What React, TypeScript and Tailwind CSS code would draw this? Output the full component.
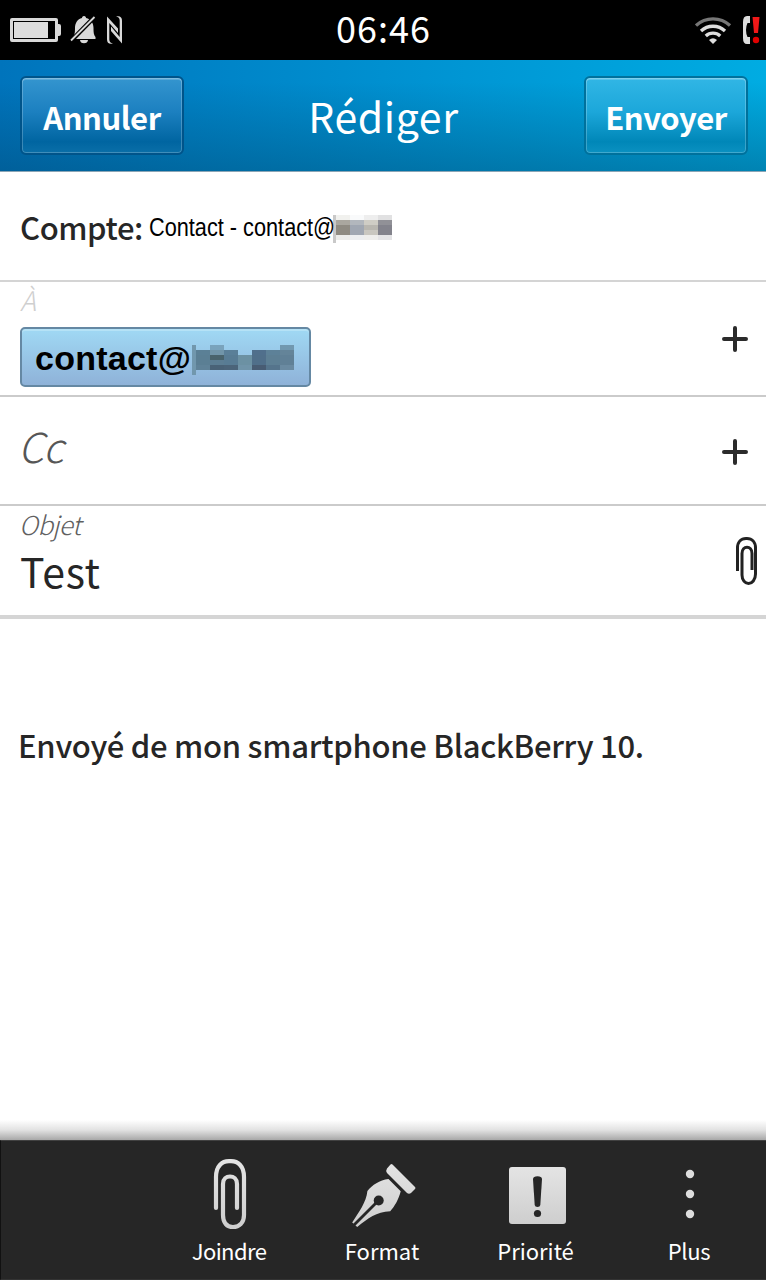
import type { ReactNode } from "react";

const toMosaic: (string | null)[][] = [
  [null, "#7aa3bc", null, null, null, null, "#7198b0"],
  ["#5b8096", "#7195a9", "#5a7f98", null, "#506f8c", "#5d8198", "#648499"],
  ["#5b7f94", "#49636c", "#587c94", "#6c91a3", "#506f8a", "#5d7f94", "#608096"],
  ["#5b7f94", "#5b7d93", "#587c94", "#6c91a3", "#506f8a", "#5d7f94", "#608096"],
  ["#5f8298", "#496277", "#4b6479", "#7094a9", "#485c73", "#55748c", "#6a8aa1"],
];

const accountMosaic: string[][] = [
  ["#f1f1ee", "#f9fafb", "#eeeeee", "#e1e1e2"],
  ["#aaa79f", "#b2b7bd", "#cfcdc5", "#919197"],
  ["#8f8b82", "#a0a7b2", "#b9b7b0", "#83838c"],
  ["#8f8b82", "#a0a7b2", "#c9c7c0", "#83838c"],
  ["#ececea", "#eceef0", "#eeeeec", "#e4e4e6"],
];

function Mosaic({ rows }: { rows: (string | null)[][] }) {
  return (
    <div className="flex flex-col" aria-hidden="true">
      {rows.map((row, y) => (
        <div key={y} className="flex h-[5px]">
          {row.map((c, x) => (
            <span key={x} className="w-[14px]" style={{ background: c ?? "transparent" }} />
          ))}
        </div>
      ))}
    </div>
  );
}

function HeaderButton({ children, className }: { children: ReactNode; className: string }) {
  return (
    <button
      className={`flex h-[79px] w-[164px] items-center justify-center rounded-[6px] border-2 text-[31px] leading-none font-bold tracking-[-0.45px] shadow-[inset_0_0_0_1px_rgba(255,255,255,0.22),inset_0_2px_0_rgba(255,255,255,0.2)] ${className}`}
    >
      <span className="pt-[2px]">{children}</span>
    </button>
  );
}

function Plus() {
  return (
    <svg width="26" height="26" viewBox="0 0 26 26" fill="none" stroke="#2b2b2b" strokeWidth="4" strokeLinecap="round">
      <path d="M13 2v22M2 13h22" />
    </svg>
  );
}

function ToolItem({ icon, label, width, text = "" }: { icon: ReactNode; label: string; width: string; text?: string }) {
  return (
    <div className={`flex flex-col items-center ${width}`}>
      <div className="flex h-[95px] w-full justify-center">{icon}</div>
      <span className={`text-[22px] leading-[28px] whitespace-nowrap ${text}`}>{label}</span>
    </div>
  );
}

export default function App() {
  return (
    <div className="flex h-[1280px] w-[766px] flex-col overflow-hidden bg-white font-['Noto_Sans_CJK_SC','Noto_Sans',sans-serif] text-[#262626]">
      <svg width="0" height="0" className="absolute">
        <defs>
          <linearGradient id="silver" x1="0" y1="0" x2="0" y2="1">
            <stop offset="0" stopColor="#e4e4e4" />
            <stop offset="1" stopColor="#cecece" />
          </linearGradient>
        </defs>
      </svg>

      <div className="flex h-[60px] shrink-0 bg-black text-white">
        <div className="flex w-[336px] pt-[16px] pl-[10px]">
          <svg width="116" height="30" viewBox="10 16 116 30">
            <path fill="#d9d9d9" fillRule="evenodd" d="M12 18h44q2 0 2 2v4h1q2 0 2 2v8q0 2-2 2h-1v4q0 2-2 2H12q-2 0-2-2V20q0-2 2-2zm1 3v18h42V21z" />
            <path fill="#dddddd" d="M14 22h34v16H14z" />
            <path fill="#d9d9d9" d="M84 16c1.500 0 2 1 2 2 5 1 7.500 5 7.500 10 0 5 .5 7 2 9v2H73v-2c1.500-2 2-4 2-9 0-5 2.500-9 7-10 0-1 .5-2 2-2zM80 40h8c0 2-1.800 3.300-4 3.300S80 42 80 40z" />
            <path stroke="#000" strokeWidth="4.500" d="M70.500 41.500L95 16.500" />
            <path stroke="#d9d9d9" strokeWidth="1.800" d="M71 40.500L94.500 17" />
            <path
              fill="#d9d9d9"
              d="M107 16.500L118 28.500v4.500L109.300 23V39.500q0 3.200 3.700 4.300h-2q-4 0-4-4.500zM122 43.500L111 31v-4.500L119.700 37V20.500q0-3.200-3.700-4.300h2q4 0 4 4.500z"
            />
          </svg>
        </div>
        <div className="flex w-[95px] justify-center text-[36px] leading-[55px] tracking-[1px] whitespace-nowrap">06:46</div>
        <div className="flex flex-1 justify-end pt-[16px] pr-[5px]">
          <svg width="66" height="30" viewBox="695 16 66 30" fill="none">
            <g stroke="#dedede" strokeWidth="3.300">
              <path stroke="#777" d="M696 25.500a25 25 0 0 1 34 0" />
              <path d="M701 31a17.500 17.500 0 0 1 24 0" />
              <path d="M705.800 36a10.500 10.500 0 0 1 14.400 0" />
            </g>
            <path fill="#dedede" d="M709 40q4-3.500 8 0l-4 4z" />
            <path fill="#dddddd" d="M750 16v7h-2.500q-1.500 3-1.500 7t1.500 7h2.500v7h-3q-4 0-4-6V22q0-6 4-6z" />
            <path fill="#f01818" d="M752.500 17h7l-1.500 16h-4z" />
            <circle cx="756" cy="40" r="3.200" fill="#df0000" />
          </svg>
        </div>
      </div>

      <header className="h-[112px] shrink-0 border-b border-[#8ba5b5] bg-[linear-gradient(90deg,#0074bc,#0090d0_50%,#00ace2)] text-white">
        <div className="flex h-full items-start justify-between bg-[linear-gradient(180deg,transparent_20%,rgba(0,60,95,0.36)_100%)] pt-[16px] pr-[18px] pl-[20px]">
          <HeaderButton className="border-[#00548a] bg-[linear-gradient(180deg,#3495cf,#1c80c0_45%,#0065a1_85%,#0a6fa8)]">Annuler</HeaderButton>
          <h1 className="pt-[9px] pr-[1px] text-[41px] leading-[60px] font-normal tracking-[0.6px]">Rédiger</h1>
          <HeaderButton className="border-[#00719c] bg-[linear-gradient(180deg,#31b6e5,#1ca7da_45%,#0087b8_85%,#0b91c1)]">Envoyer</HeaderButton>
        </div>
      </header>

      <section className="flex h-[110px] shrink-0 border-b-2 border-[#d4d4d4] pl-[20px]">
        <span className="w-[129px] shrink-0 pt-[33px] text-[31px] leading-[44px] font-medium tracking-[-0.4px]">Compte:</span>
        <div className="w-[184px] pt-[35px]">
          <span className="inline-block origin-left scale-x-[0.835] font-['Liberation_Sans',sans-serif] text-[26px] leading-[40px] whitespace-nowrap text-black">
            Contact - contact@
          </span>
        </div>
        <div className="flex pt-[43px]">
          <span className="h-[28px] w-[3px] bg-[#c9c9c9]" />
          <Mosaic rows={accountMosaic} />
        </div>
      </section>

      <section className="flex h-[115px] shrink-0 justify-between border-b-2 border-[#cbcbcb] pr-[18px] pl-[20px]">
        <div>
          <div className="h-[45px] pt-px text-[27px] leading-[34px] font-light text-[#cfcfcf] italic">À</div>
          <div className="flex h-[60px] w-[291px] rounded-[5px] border-2 border-[#6588a3] bg-[linear-gradient(180deg,#a0d9f4,#8fb2d8)] pl-[13px] shadow-[inset_0_2px_0_#b5e2f6]">
            <span className="w-[157px] font-['Liberation_Sans',sans-serif] text-[34px] leading-[58px] font-bold tracking-[0.25px] text-black">contact@</span>
            <div className="flex pt-[16px]">
              <span className="h-[30px] w-[4px] bg-[#7197ad]" />
              <Mosaic rows={toMosaic} />
            </div>
          </div>
        </div>
        <div className="pt-[44px]"><Plus /></div>
      </section>

      <section className="flex h-[109px] shrink-0 justify-between border-b-2 border-[#cbcbcb] pr-[18px] pl-[18px]">
        <span className="pt-[18px] text-[41px] leading-[60px] font-light tracking-[-0.6px] text-[#565656] italic">Cc</span>
        <div className="pt-[42px]"><Plus /></div>
      </section>

      <section className="flex h-[113px] shrink-0 justify-between border-b-4 border-[#d5d5d5] pr-[8px] pl-[19px]">
        <div>
          <div className="h-[34px] text-[26px] leading-[36px] font-light tracking-[-0.5px] text-[#606060] italic">Objet</div>
          <div className="pl-[1px] text-[41px] leading-[60px] tracking-[0.7px]">Test</div>
        </div>
        <div className="pt-[31px]">
          <svg width="23" height="48" viewBox="0 0 23 48" fill="none" stroke="#222" strokeWidth="3">
            <path d="M2.500 34V11C2.500 5 6 1.500 11 1.500h1C17 1.500 20.500 5 20.500 11v26c0 6-3.500 9.500-7 9.500S7 43 7 38V16.500C7 8 17 8 17 16.500V33" />
          </svg>
        </div>
      </section>

      <main className="flex flex-1 flex-col justify-between">
        <p className="pt-[104px] pl-[18px] text-[31px] leading-[44px] font-medium tracking-[-0.27px] whitespace-nowrap">Envoyé de mon smartphone BlackBerry 10.</p>
        <div className="h-[20px] bg-[linear-gradient(180deg,#fff,#e2e2e2_50%,#a8a8a8)]" />
      </main>

      <footer className="flex h-[140px] shrink-0 border-t border-b border-l border-t-[#414141] border-b-[#333] border-l-[#111] bg-[#262626] pl-[152px] text-white">
        <ToolItem
          width="w-[152px]"
          label="Joindre"
          text="tracking-[-0.6px]"
          icon={
            <svg className="mt-[17px] ml-[1px]" width="34" height="72" viewBox="0 0 34 72" fill="none" stroke="url(#silver)" strokeWidth="4.200">
              <path strokeLinecap="round" d="M3 50V19C3 8 9 3.200 16 3.200h2C25 3.200 31 8 31 19v38c0 8-5 12-11 12S10 65 10 57V26c0-10 14-10 14 0v24" />
            </svg>
          }
        />
        <ToolItem
          width="w-[154px]"
          label="Format"
          icon={
            <svg className="mt-[22px] ml-[4px]" width="66" height="66" viewBox="351 1163 66 66">
              <path
                fill="url(#silver)"
                d="M390.500 1164.500q1-1 2 0L415 1187q1 1 0 2l-4 4q-2 1.500-4 0L387 1173q-1.500-2.500 0-4.500zM388.500 1179l12.200 12.300c-2 8-6 15-10.500 20-14 .5-22 7-33 15.700l-5-4.500c7-11 14-20 15.200-31.500 5-6 12-11 21.100-12z"
              />
              <circle cx="378.700" cy="1200.500" r="5" fill="#262626" />
              <path d="M378.500 1200.500L353.500 1225.500" stroke="#262626" strokeWidth="2.800" />
            </svg>
          }
        />
        <ToolItem
          width="w-[153px]"
          label="Priorité"
          icon={
            <svg className="mt-[26px] ml-[4px]" width="57" height="57" viewBox="0 0 57 57">
              <rect width="57" height="57" rx="3" fill="url(#silver)" />
              <path fill="#262626" d="M24 12q.3-2.800 4.500-2.800T33 12l-1.700 26q-.3 2-2.800 2t-2.800-2z" />
              <circle cx="28.500" cy="46.500" r="3.600" fill="#262626" />
            </svg>
          }
        />
        <ToolItem
          width="w-[154px]"
          label="Plus"
          text="tracking-[-0.3px]"
          icon={
            <svg className="mt-[28px] ml-[2px]" width="10" height="50" viewBox="0 0 10 50" fill="#dddddd">
              <circle cx="5" cy="5" r="4.200" />
              <circle cx="5" cy="25" r="4.200" />
              <circle cx="5" cy="45" r="4.200" />
            </svg>
          }
        />
      </footer>
    </div>
  );
}
